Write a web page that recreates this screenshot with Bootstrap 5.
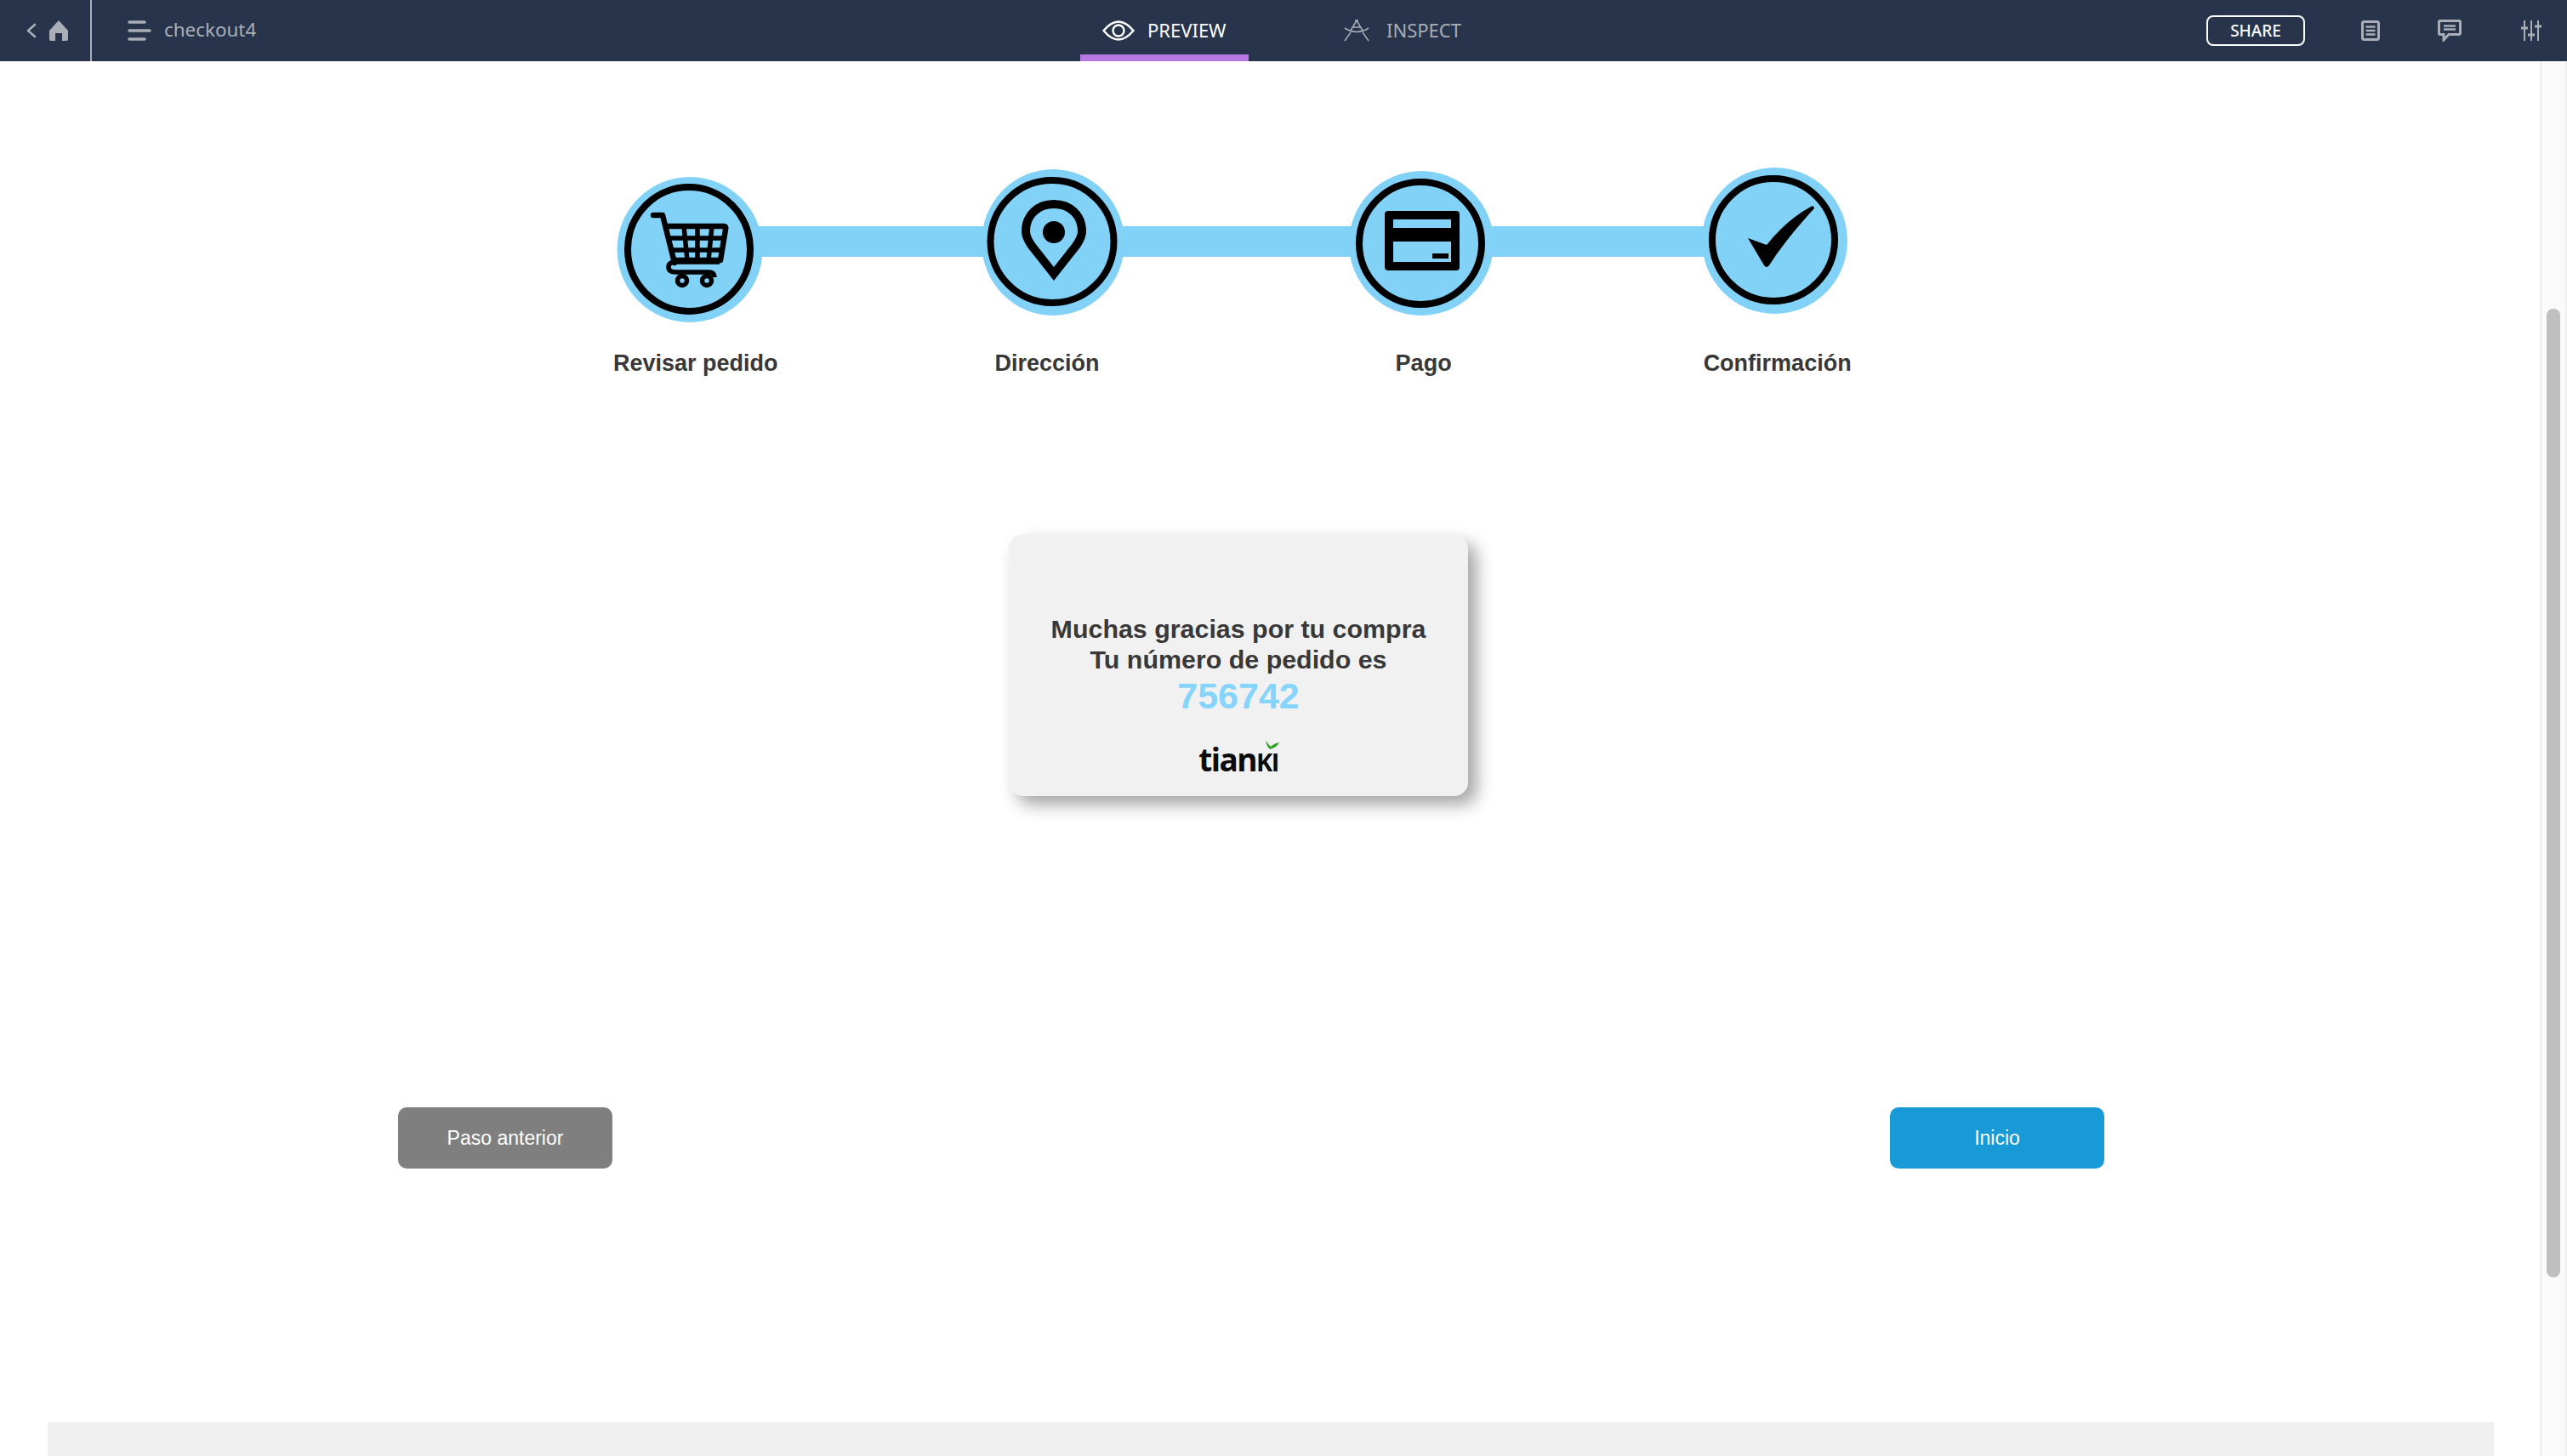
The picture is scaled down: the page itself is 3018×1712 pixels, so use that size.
<!DOCTYPE html>
<html lang="es">
<head>
  <meta charset="UTF-8" />
  <meta name="viewport" content="width=device-width, initial-scale=1" />
  <title>checkout4</title>
  <link href="https://cdn.jsdelivr.net/npm/bootstrap@5.3.3/dist/css/bootstrap.min.css" rel="stylesheet" />
  <style>
    body { font-family: "Liberation Sans", Arial, sans-serif; color: #383838; }

    /* top bar */
    .top-bar { height: 72px; background: #28344b; color: #a9aeb7; font-family: "Noto Sans", sans-serif; font-size: 22px; }
    .top-left { width: 1270px; }
    .home-box { width: 108px; border-right: 2px solid #a9aeb7; }
    .doc-name { margin-left: 15px; padding-bottom: 2px; font-size: 22.4px; }
    .burger { margin-left: 42px; }
    .tab-item { height: 72px; }
    .tab-on { width: 198px; color: #fff; border-bottom: 8px solid #b679e4; padding: 8px 0 0 26px; gap: 15px; }
    .tab-off { margin-left: 112px; gap: 20px; }
    .tab-text { padding-bottom: 2px; }
    .share-btn { width: 116px; height: 36px; margin-left: 0; border: 2px solid #fff; border-radius: 8px; color: #fff; font-size: 19px; font-weight: 500; line-height: 1; }
    .top-right { margin-left: auto; }
    .ico-doc { margin-left: 66px; }
    .ico-chat { margin-left: 68px; }
    .ico-sliders { margin-left: 70px; margin-right: 30px; }

    /* stepper */
    .page-main { width: 2986px; }
    .stepper { margin-top: 125px; height: 182px; }
    .step-bar { left: 890px; top: 69px; width: 1120px; height: 36px; background: #82d2f8; }
    .step-ico { display: block; z-index: 1; position: relative; }
    .s1 { margin: 11px 0 0 725px; }
    .s2 { margin: 2px 0 0 257px; }
    .s3 { margin: 4px 0 0 264px; }
    .s4 { margin: 0 0 0 245px; }
    .step-labels { margin-top: 32px; font-size: 27px; font-weight: 700; line-height: 32px; }
    .l1 { margin-left: 721px; }
    .l2 { margin-left: 255px; }
    .l3 { margin-left: 348px; }
    .l4 { margin-left: 296px; }

    /* order card */
    .thanks-box { width: 540px; height: 307px; margin: 186px 0 0 1186px; padding-top: 92px; background: #f1f1f1; border-radius: 16px; box-shadow: 10px 10px 20px rgba(0, 0, 0, .36); font-size: 30.4px; font-weight: 700; line-height: 36px; }
    .order-no { color: #85d4fb; font-size: 43px; line-height: 50px; }
    .brand { margin-top: 28px; height: 40px; color: #0c0c0c; font-family: "Open Sans", sans-serif; font-size: 37px; font-weight: 700; line-height: 40px; letter-spacing: -1.6px; }
    .brand-sc { font-variant: small-caps; font-size: 41px; }
    .brand-leaf { left: 301px; top: -1px; }

    /* buttons */
    .nav-btns { width: 2006px; margin: 366px 0 0 468px; }
    .act-btn { width: 252px; height: 72px; border: 0; border-radius: 10px; color: #fff; font-size: 23px; }
    .act-prev, .act-prev:hover { background: #7f7f7f; color: #fff; }
    .act-next, .act-next:hover { background: #189ad6; color: #fff; }
    .foot-band { width: 2876px; height: 60px; margin: 298px 0 0 56px; background: #f0f0f0; }

    /* scrollbar */
    .fake-scroll { width: 32px; background: #fafafa; border-left: 2px solid #eee; border-right: 2px solid #eee; }
    .fake-thumb { width: 16px; height: 1139px; margin: 291px 0 0 6px; background: #bfbfbf; border-radius: 8px; }
  </style>
</head>
<body class="vh-100 overflow-hidden d-flex flex-column">

<header class="top-bar d-flex align-items-center flex-shrink-0">
  <div class="top-left d-flex align-items-center h-100">
    <div class="home-box h-100 d-flex">
      <svg width="106" height="72" viewBox="0 0 106 72">
        <path d="M41 29 L33 36 L41 43" fill="none" stroke="#a9aeb7" stroke-width="2.6" stroke-linecap="round" stroke-linejoin="round"/>
        <path d="M69 24 L80 36 V46 Q80 48 78 48 H73 V39 H65 V48 H60 Q58 48 58 46 V36 Z" fill="#a9aeb7"/>
      </svg>
    </div>
    <svg class="burger" width="28" height="24" viewBox="0 0 28 24">
      <g stroke="#a9aeb7" stroke-width="3.4" stroke-linecap="round">
        <path d="M2 2 H20"/><path d="M2 12 H26"/><path d="M2 22 H20"/>
      </g>
    </svg>
    <span class="doc-name">checkout4</span>
  </div>

  <div class="tab-item tab-on d-flex align-items-center">
    <svg width="38" height="24" viewBox="0 0 38 24">
      <path d="M1.5 12 Q19 -9 36.5 12 Q19 33 1.5 12 Z" fill="none" stroke="#fff" stroke-width="2.4"/>
      <circle cx="19" cy="12" r="6.5" fill="none" stroke="#fff" stroke-width="2.4"/>
    </svg>
    <span class="tab-text">PREVIEW</span>
  </div>
  <div class="tab-item tab-off d-flex align-items-center">
    <svg width="30" height="26" viewBox="0 0 30 26">
      <g fill="none" stroke="#a9aeb7" stroke-width="1.5">
        <path d="M15 1 L8 13 M15 1 L22 13 M13 1 H17 M11 9 H19"/>
        <path d="M1 10 Q15 19 29 10"/>
        <path d="M8 15 L1 25 M22 15 L29 25"/>
      </g>
    </svg>
    <span class="tab-text">INSPECT</span>
  </div>

  <div class="top-right d-flex align-items-center">
    <button type="button" class="btn share-btn p-0">SHARE</button>
    <svg class="ico-doc" width="22" height="24" viewBox="0 0 22 24">
      <rect x="1.5" y="1.5" width="19" height="21" rx="2" fill="none" stroke="#a9aeb7" stroke-width="3"/>
      <path d="M5.5 7.5 H16.5 M5.5 12 H16.5 M5.5 16.5 H16.5" stroke="#a9aeb7" stroke-width="2.4"/>
    </svg>
    <svg class="ico-chat" width="28" height="26" viewBox="0 0 28 26">
      <path d="M3 1.5 H25 Q26.5 1.5 26.5 3 V16 Q26.5 17.5 25 17.5 H13 L7 24 V17.5 H3 Q1.5 17.5 1.5 16 V3 Q1.5 1.5 3 1.5 Z" fill="none" stroke="#a9aeb7" stroke-width="3"/>
      <path d="M7 7.5 H21 M7 11.5 H21" stroke="#a9aeb7" stroke-width="2.4"/>
    </svg>
    <svg class="ico-sliders" width="24" height="24" viewBox="0 0 24 24">
      <g stroke="#a9aeb7" stroke-width="2">
        <path d="M4 0 V24 M12 0 V24 M20 0 V24"/>
        <path d="M0 9 H8 M8 17 H16 M16 7 H24" stroke-width="3"/>
      </g>
    </svg>
  </div>
</header>

<div class="d-flex flex-grow-1 overflow-hidden">
  <main class="page-main flex-shrink-0">
    <div class="stepper position-relative d-flex align-items-start">
      <div class="step-bar position-absolute"></div>

      <svg class="step-ico s1" width="172" height="171" viewBox="725 208 172 171">
        <circle cx="811" cy="293.5" r="85.5" fill="#82d2f8"/>
        <ellipse cx="810" cy="293" rx="72" ry="73" fill="none" stroke="#000" stroke-width="8"/>
        <g fill="none" stroke="#000">
          <path d="M768 253 H779 L793 309" stroke-width="6.5" stroke-linecap="round" stroke-linejoin="round"/>
          <path d="M783 266 H851 Q854 266 853 270 L847 306 H791" stroke-width="6.5" stroke-linejoin="round"/>
          <path d="M785 280 H851 M788 294 H849" stroke-width="5.5"/>
          <path d="M804 266 L808 306 M820 266 V306 M837 266 L833 306" stroke-width="5.5"/>
          <path d="M846 308 H795 Q786 308 786 314 Q786 320 795 320 H833 Q840 320 840 326" stroke-width="5.5"/>
          <circle cx="802" cy="330" r="5.5" stroke-width="5.5"/>
          <circle cx="831" cy="330" r="5.5" stroke-width="5.5"/>
        </g>
      </svg>

      <svg class="step-ico s2" width="168" height="172" viewBox="1154 199 168 172">
        <ellipse cx="1238" cy="285" rx="84" ry="86" fill="#82d2f8"/>
        <ellipse cx="1237" cy="284" rx="72.5" ry="72" fill="none" stroke="#000" stroke-width="8"/>
        <path d="M1239 322 L1213 289 C1208 282 1206 278 1206 272 C1206 253 1220 240 1239 240 C1258 240 1272 253 1272 272 C1272 278 1270 282 1265 289 Z" fill="none" stroke="#000" stroke-width="10"/>
        <circle cx="1239" cy="273" r="13"/>
      </svg>

      <svg class="step-ico s3" width="170" height="170" viewBox="1586 201 170 170">
        <ellipse cx="1671" cy="286" rx="85" ry="85" fill="#82d2f8"/>
        <ellipse cx="1670" cy="286" rx="72" ry="72" fill="none" stroke="#000" stroke-width="8"/>
        <rect x="1628" y="248" width="88" height="70" rx="4"/>
        <rect x="1638" y="258" width="68" height="10" fill="#82d2f8"/>
        <rect x="1638" y="284" width="68" height="24" fill="#82d2f8"/>
        <rect x="1684" y="298" width="19" height="6"/>
      </svg>

      <svg class="step-ico s4" width="171" height="172" viewBox="2000 197 171 172">
        <ellipse cx="2085.5" cy="283" rx="85.5" ry="86" fill="#82d2f8"/>
        <ellipse cx="2084" cy="282" rx="72" ry="72" fill="none" stroke="#000" stroke-width="8"/>
        <path d="M2054 280 L2076 288 Q2100 258 2128 243 Q2132 241 2132 245 Q2098 282 2079 312 Q2076 316 2073 312 Z"/>
      </svg>
    </div>

    <div class="step-labels d-flex">
      <span class="l1">Revisar pedido</span>
      <span class="l2">Dirección</span>
      <span class="l3">Pago</span>
      <span class="l4">Confirmación</span>
    </div>

    <div class="thanks-box card border-0 text-center">
      <div>Muchas gracias por tu compra</div>
      <div>Tu número de pedido es</div>
      <div class="order-no">756742</div>
      <div class="brand position-relative">
        tian<span class="brand-sc">ki</span>
        <svg class="brand-leaf position-absolute" width="18" height="12" viewBox="0 0 18 12">
          <path d="M1 1 Q2 7 6 11 Q14 9 17 3 Q11 4 7 8 Q4 5 1 1 Z" fill="#2e9e1f"/>
        </svg>
      </div>
    </div>

    <div class="nav-btns d-flex justify-content-between">
      <button type="button" class="btn act-btn act-prev">Paso anterior</button>
      <button type="button" class="btn act-btn act-next">Inicio</button>
    </div>

    <div class="foot-band"></div>
  </main>

  <div class="fake-scroll flex-shrink-0">
    <div class="fake-thumb"></div>
  </div>
</div>

<script src="https://cdn.jsdelivr.net/npm/bootstrap@5.3.3/dist/js/bootstrap.bundle.min.js"></script>
</body>
</html>
